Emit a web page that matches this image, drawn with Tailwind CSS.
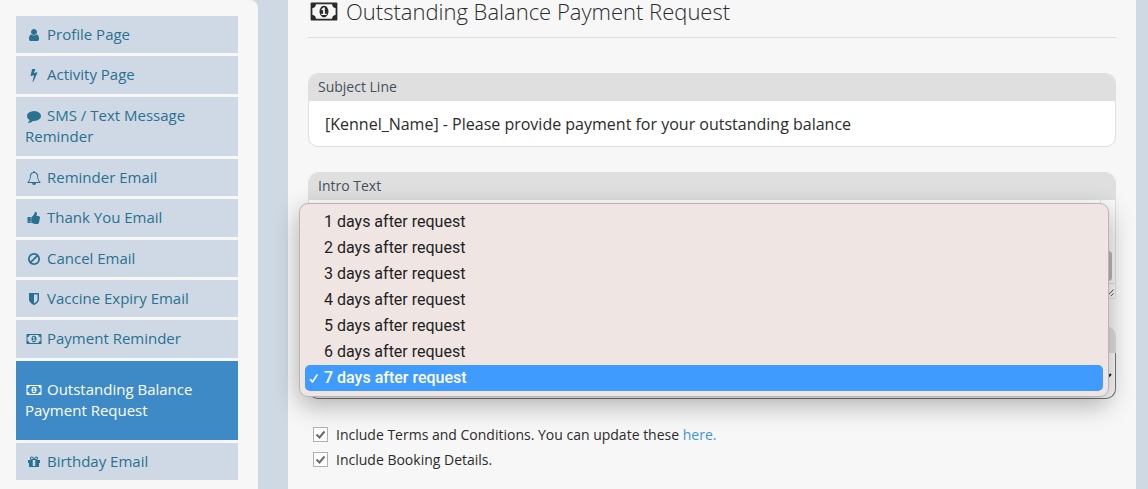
<!DOCTYPE html>
<html lang="en">
<head>
    <meta charset="UTF-8">
    <meta name="viewport" content="width=device-width, initial-scale=1.0">
    <title>Outstanding Balance Payment Request</title>
    <script src="https://cdn.jsdelivr.net/npm/@tailwindcss/browser@4"></script>
</head>
<body class="bg-[#cfd9e4] font-['Open_Sans',sans-serif] text-[#2b2b2b] overflow-hidden">

<!-- icon shapes shared by the menu and the heading -->
<svg class="hidden">
    <symbol id="user" viewBox="0 0 1792 1792"><path d="M1536 1399q0 109-62.5 187t-150.5 78h-854q-88 0-150.5-78t-62.5-187q0-85 8.5-160.5t31.5-152 58.5-131 94-89 134.5-34.5q131 128 313 128t313-128q76 0 134.5 34.5t94 89 58.5 131 31.5 152 8.5 160.5zm-256-887q0 159-112.5 271.5t-271.5 112.5-271.5-112.5-112.5-271.5 112.5-271.5 271.5-112.5 271.5 112.5 112.5 271.5z"/></symbol>
    <symbol id="bolt" viewBox="0 0 1792 1792"><path d="M1333 566q18 20 7 44l-540 1157q-13 25-42 25-4 0-14-2-17-5-25.5-19t-4.5-30l197-808-406 101q-4 1-12 1-18 0-31-11-18-15-13-39l201-825q4-14 16-23t28-9h328q19 0 32 12.5t13 29.5q0 8-5 18l-171 463 396-98q8-2 12-2 19 0 34 15z"/></symbol>
    <symbol id="comment" viewBox="0 0 1792 1792"><path d="M1792 896q0 174-120 321.5t-326 233-450 85.5q-70 0-145-8-198 175-460 242-49 14-114 22-17 2-30.5-9t-17.5-29v-1q-3-4-.5-12t2-10 4.5-9.5l6-9 7-8.5 8-9q7-8 31-34.5t34.5-38 31-39.5 32.5-51 27-59 26-76q-157-89-247.5-220t-90.5-281q0-130 71-248.5t191-204.5 286-136.5 348-50.5q244 0 450 85.5t326 233 120 321.5z"/></symbol>
    <symbol id="bell" viewBox="0 0 1792 1792"><path d="M912 1696q0-16-16-16-59 0-101.5-42.5t-42.5-101.5q0-16-16-16t-16 16q0 73 51.5 124.5t124.5 51.5q16 0 16-16zm-666-288h1300q-266-300-266-832 0-51-24-105t-69-103-121.5-80.5-169.5-31.5-169.5 31.5-121.5 80.5-69 103-24 105q0 532-266 832zm1482 0q0 52-38 90t-90 38h-448q0 106-75 181t-181 75-181-75-75-181h-448q-52 0-90-38t-38-90q50-42 91-88t85-119.5 74.5-158.5 50-206 19.5-260q0-152 117-282.5t307-158.5q-8-19-8-39 0-40 28-68t68-28 68 28 28 68q0 20-8 39 190 28 307 158.5t117 282.5q0 139 19.5 260t50 206 74.5 158.5 85 119.5 91 88z"/></symbol>
    <symbol id="thumb" viewBox="0 0 1792 1792"><path d="M320 1344q0-26-19-45t-45-19q-27 0-45.5 19t-18.5 45q0 27 18.5 45.5t45.5 18.5q26 0 45-18.5t19-45.5zm160-512v640q0 26-19 45t-45 19h-288q-26 0-45-19t-19-45v-640q0-26 19-45t45-19h288q26 0 45 19t19 45zm1184 0q0 86-55 149 15 44 15 76 3 76-43 137 17 56 0 117-15 57-54 94 9 112-49 181-64 76-197 78h-129q-66 0-144-15.5t-121.5-29-120.5-39.5q-123-43-158-44-26-1-45-19.5t-19-44.5v-641q0-25 18-43.5t43-20.5q24-2 76-59t101-121q68-87 101-120 18-18 31-48t17.5-48.5 13.5-60.5q7-39 12.5-61t19.5-52 34-50q19-19 45-19 46 0 82.5 10.5t60 26 40 40.5 24 45 12 50 5 45 .5 39q0 38-9.5 76t-19 60-27.5 56q-3 6-10 18t-11 22-8 24h277q78 0 135 57t57 135z"/></symbol>
    <symbol id="ban" viewBox="0 0 1792 1792"><path d="M1440 893q0-161-87-295l-754 753q137 89 297 89 111 0 211.5-43.5t173.5-116.5 116-174.5 43-212.5zm-999 299l755-754q-135-91-300-91-148 0-273 73t-198 199-73 274q0 162 89 299zm1223-299q0 157-61 300t-163.5 246-245 164-298.5 61-298.5-61-245-164-163.5-246-61-300 61-299.5 163.5-245.5 245-164 298.5-61 298.5 61 245 164 163.5 245.5 61 299.5z"/></symbol>
    <symbol id="shield" viewBox="0 0 1792 1792"><path d="M1344 960v-640h-448v1137q119-63 213-137 235-184 235-360zm192-768v768q0 86-33.5 170.5t-83 150-118 127.5-126.5 103-121 77.5-89.5 49.5-42.5 20q-12 6-26 6t-26-6q-16-7-42.5-20t-89.5-49.5-121-77.5-126.5-103-118-127.5-83-150-33.5-170.5v-768q0-26 19-45t45-19h1152q26 0 45 19t19 45z"/></symbol>
    <symbol id="money" viewBox="0 0 1920 1792"><path d="M768 1152h384v-96h-128v-448h-114l-148 137 77 80q42-37 55-57h2v288h-128v96zm512-256q0 70-21 142t-59.5 134-101.5 101-138 39-138-39-101.5-101-59.5-134-21-142 21-142 59.5-134 101.5-101 138-39 138 39 101.5 101 59.5 134 21 142zm512 256v-512q-106 0-181-75t-75-181h-1152q0 106-75 181t-181 75v512q106 0 181 75t75 181h1152q0-106 75-181t181-75zm128-832v1152q0 26-19 45t-45 19h-1792q-26 0-45-19t-19-45v-1152q0-26 19-45t45-19h1792q26 0 45 19t19 45z"/></symbol>
    <symbol id="gift" viewBox="0 0 1792 1792"><path d="M1056 1356v-716h-320v716q0 25 18 38.5t46 13.5h192q28 0 46-13.5t18-38.5zm-456-844h195l-126-161q-26-31-69-31-40 0-68 28t-28 68 28 68 68 28zm688-96q0-40-28-68t-68-28q-43 0-69 31l-125 161h194q40 0 68-28t28-68zm376 256v320q0 14-9 23t-23 9h-96v416q0 40-28 68t-68 28h-1088q-40 0-68-28t-28-68v-416h-96q-14 0-23-9t-9-23v-320q0-14 9-23t23-9h440q-93 0-158.5-65.5t-65.5-158.5 65.5-158.5 158.5-65.5q107 0 168 77l128 165 128-165q61-77 168-77 93 0 158.5 65.5t65.5 158.5-65.5 158.5-158.5 65.5h440q14 0 23 9t9 23z"/></symbol>
</svg>

<div class="flex min-h-screen pr-3 gap-[30px]">
    <aside class="w-[258px] shrink-0 bg-[#f7f7f7] rounded-tr-lg pl-4 pr-5 pt-4">
        <nav class="flex flex-col gap-[3px] text-[15px] leading-[21px] text-[#2a7190]">
            <a href="#" class="block bg-[#cfd9e5] px-[9px] py-2"><svg class="inline-block w-[18px] h-[14px] mr-1 -mt-px fill-current"><use href="#user"/></svg>Profile Page</a>
            <a href="#" class="block bg-[#cfd9e5] px-[9px] pt-2 pb-[9px]"><svg class="inline-block w-[18px] h-[14px] mr-1 -mt-px fill-current"><use href="#bolt"/></svg>Activity Page</a>
            <a href="#" class="block bg-[#cfd9e5] px-[9px] pt-2 pb-[9px]"><svg class="inline-block w-[18px] h-[14px] mr-1 -mt-px fill-current"><use href="#comment"/></svg>SMS / Text Message Reminder</a>
            <a href="#" class="block bg-[#cfd9e5] px-[9px] py-2"><svg class="inline-block w-[18px] h-[14px] mr-1 -mt-px fill-current"><use href="#bell"/></svg>Reminder Email</a>
            <a href="#" class="block bg-[#cfd9e5] px-[9px] pt-2 pb-[9px]"><svg class="inline-block w-[18px] h-[14px] mr-1 -mt-px fill-current"><use href="#thumb"/></svg>Thank You Email</a>
            <a href="#" class="block bg-[#cfd9e5] px-[9px] py-2"><svg class="inline-block w-[18px] h-[14px] mr-1 -mt-px fill-current"><use href="#ban"/></svg>Cancel Email</a>
            <a href="#" class="block bg-[#cfd9e5] px-[9px] py-2"><svg class="inline-block w-[18px] h-[14px] mr-1 -mt-px fill-current"><use href="#shield"/></svg>Vaccine Expiry Email</a>
            <a href="#" class="block bg-[#cfd9e5] px-[9px] pt-2 pb-[9px]"><svg class="inline-block w-[18px] h-[14px] mr-1 -mt-px fill-current"><use href="#money"/></svg>Payment Reminder</a>
            <a href="#" aria-current="page" class="block bg-[#3d8ac7] text-white font-medium px-[9px] pt-[18px] pb-[19px]"><svg class="inline-block w-[18px] h-[14px] mr-1 -mt-px fill-current"><use href="#money"/></svg>Outstanding Balance Payment Request</a>
            <a href="#" class="block bg-[#cfd9e5] px-[9px] py-2"><svg class="inline-block w-[18px] h-[14px] mr-1 -mt-px fill-current"><use href="#gift"/></svg>Birthday Email</a>
        </nav>
    </aside>

    <main class="flex-1 min-w-0 bg-[#f7f7f7] px-5">
        <h1 class="flex items-center gap-[6px] h-[38px] pb-[15px] border-b border-[#dedede] text-[22px] leading-6 font-light">
            <svg class="w-8 h-[25px] fill-current"><use href="#money"/></svg>Outstanding Balance Payment Request
        </h1>

        <form>
            <div class="mt-[35px] rounded-[10px] overflow-hidden border border-[#dfdfdf] bg-white">
                <label for="subject" class="block h-[27px] px-[9px] bg-[#dfdfdf] text-sm leading-[26px] text-[#454f5b]">Subject Line</label>
                <input id="subject" type="text" value="[Kennel_Name] - Please provide payment for your outstanding balance" class="block w-full h-[45px] px-4 text-base outline-none">
            </div>

            <div class="mt-[25px] rounded-t-[10px] overflow-hidden border border-[#dfdfdf] bg-white">
                <label for="intro" class="block h-[27px] px-[9px] bg-[#dfdfdf] text-sm leading-[26px] text-[#454f5b]">Intro Text</label>
                <div class="relative">
                    <textarea id="intro" class="block w-full h-[98px] resize-none outline-none"></textarea>
                    <!-- scroll bar and resize grip -->
                    <div class="absolute right-0 inset-y-0 w-[15px] border-l border-[#e4e4e4] bg-[#fafafa]">
                        <div class="absolute right-[3px] top-[51px] w-2 h-[30px] rounded-full bg-[#b8b8b8]"></div>
                        <svg class="absolute right-0 bottom-0 w-[14px] h-[15px] border-t border-[#dcdcdc]" viewBox="0 0 14 15" fill="none" stroke="#444"><path d="M6 13l7-7M10 13l3-3"/></svg>
                    </div>
                </div>
            </div>

            <div class="relative mt-[27px] pt-[27px] rounded-[10px] bg-[#dfdfdf]">
                <div class="relative">
                    <select aria-label="Days after request" class="block w-full h-[46px] px-4 appearance-none bg-[#fbfbfb] border border-t-0 border-[#777] rounded-b-[10px] text-base">
                        <option>7 days after request</option>
                    </select>
                    <svg class="absolute right-1 top-[18px] w-3 h-3" viewBox="0 0 12 12" fill="none" stroke="#222" stroke-width="2"><path d="M1 3l5 5 5-5"/></svg>
                </div>

                <!-- open list of the drop-down -->
                <div role="listbox" aria-label="Days after request" class="absolute -left-[9px] right-[7px] bottom-[2px] p-[5px] rounded-[9px] border border-[#b9b5b4] bg-[#efe6e4] shadow-[0_8px_26px_rgba(0,0,0,0.3)] font-['Roboto',sans-serif] text-base leading-[26px] text-[#222]">
                    <button type="button" role="option" class="block w-full pl-[19px] text-left">1 days after request</button>
                    <button type="button" role="option" class="block w-full pl-[19px] text-left">2 days after request</button>
                    <button type="button" role="option" class="block w-full pl-[19px] text-left">3 days after request</button>
                    <button type="button" role="option" class="block w-full pl-[19px] text-left">4 days after request</button>
                    <button type="button" role="option" class="block w-full pl-[19px] text-left">5 days after request</button>
                    <button type="button" role="option" class="block w-full pl-[19px] text-left">6 days after request</button>
                    <button type="button" role="option" aria-selected="true" class="flex items-center w-full pl-1 gap-[5px] rounded-[5px] bg-[#3f9bfd] text-white font-medium text-left"><svg class="w-[10px] h-3" viewBox="0 0 10 12" fill="none" stroke="currentColor" stroke-width="1.6" stroke-linecap="round" stroke-linejoin="round"><path d="M1.500 7.500l2 2.500L8 3"/></svg>7 days after request</button>
                </div>
            </div>

            <div class="mt-[23px] pl-[5px] text-sm leading-[25px]">
                <div class="flex items-center gap-2">
                    <span class="relative size-[15px]">
                        <input id="terms" type="checkbox" checked class="block size-[15px] appearance-none border border-[#b0b0b0] bg-white">
                        <svg class="absolute inset-0 size-[15px] pointer-events-none" viewBox="0 0 15 15" fill="none" stroke="#6b6b6b" stroke-width="2"><path d="M3.500 7.500l3 3 5-6"/></svg>
                    </span>
                    <p><label for="terms">Include Terms and Conditions. You can update these</label> <a href="#" class="text-[#3f93d6]">here.</a></p>
                </div>
                <div class="flex items-center gap-2">
                    <span class="relative size-[15px]">
                        <input id="booking" type="checkbox" checked class="block size-[15px] appearance-none border border-[#b0b0b0] bg-white">
                        <svg class="absolute inset-0 size-[15px] pointer-events-none" viewBox="0 0 15 15" fill="none" stroke="#6b6b6b" stroke-width="2"><path d="M3.500 7.500l3 3 5-6"/></svg>
                    </span>
                    <label for="booking">Include Booking Details.</label>
                </div>
            </div>
        </form>
    </main>
</div>
</body>
</html>
